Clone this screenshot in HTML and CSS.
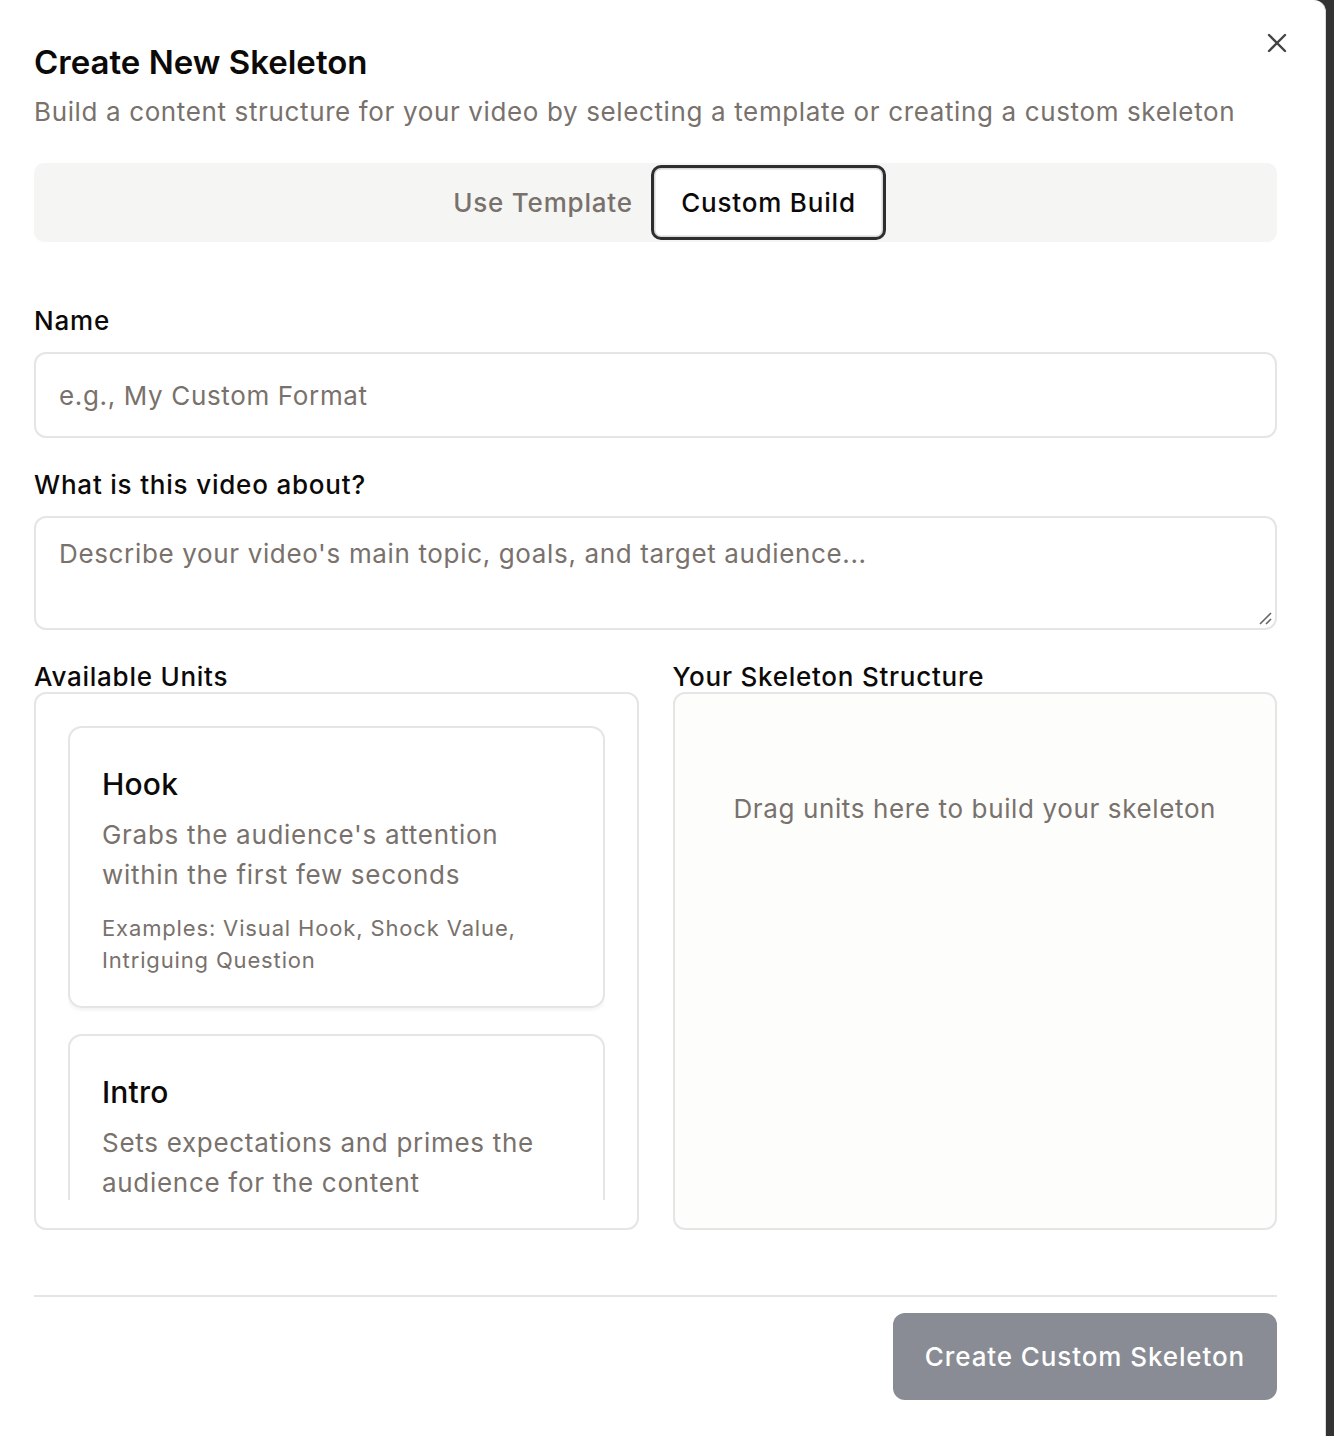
FILE: index.html
```html
<!DOCTYPE html>
<html lang="en">
<head>
<meta charset="utf-8">
<title>Create New Skeleton</title>
<link rel="stylesheet" href="styles.css">
</head>
<body>
<div class="modal">
  <button class="close" aria-label="Close">
    <svg width="20" height="20" viewBox="0 0 20 20"><path d="M2 2 L18 18 M18 2 L2 18" stroke="#444" stroke-width="2.4" stroke-linecap="round" fill="none"/></svg>
  </button>
  <h1 class="title">Create New Skeleton</h1>
  <p class="subtitle">Build a content structure for your video by selecting a template or creating a custom skeleton</p>

  <div class="tabs">
    <button class="tab">Use Template</button>
    <button class="tab active">Custom Build</button>
  </div>

  <label class="label first">Name</label>
  <div class="input"><span class="ph">e.g., My Custom Format</span></div>

  <label class="label">What is this video about?</label>
  <div class="textarea">
    <span class="ph">Describe your video's main topic, goals, and target audience...</span>
    <svg class="grip" width="14" height="14" viewBox="0 0 14 14"><path d="M2 13 L13 2 M8 13 L13 8" stroke="#666" stroke-width="1.6" fill="none"/></svg>
  </div>

  <div class="columns">
    <div class="col">
      <div class="col-label">Available Units</div>
      <div class="box units">
        <div class="list">
          <div class="card">
            <div class="card-title">Hook</div>
            <div class="card-desc">Grabs the audience's attention within the first few seconds</div>
            <div class="card-ex">Examples: Visual Hook, Shock Value, Intriguing Question</div>
          </div>
          <div class="card">
            <div class="card-title">Intro</div>
            <div class="card-desc">Sets expectations and primes the audience for the content</div>
          </div>
        </div>
      </div>
    </div>
    <div class="col">
      <div class="col-label">Your Skeleton Structure</div>
      <div class="box drop">
        <div class="drop-text">Drag units here to build your skeleton</div>
      </div>
    </div>
  </div>

  <div class="footer">
    <button class="primary">Create Custom Skeleton</button>
  </div>
</div>
</body>
</html>
```

FILE: styles.css
```css
* { box-sizing: border-box; }
html, body { margin: 0; padding: 0; }
body {
  background: #333333;
  font-family: Inter, "Noto Sans", "Liberation Sans", sans-serif;
  color: #0c0a09;
  height: 1436px;
  overflow: hidden;
  letter-spacing: 0.7px;
}
.modal {
  position: relative;
  width: 1326px;
  min-height: 1436px;
  background: #ffffff;
  border-right: 1px solid #dcdcdc;
  border-top-right-radius: 12px;
  padding: 42px 48px 40px 34px;
}
.close {
  position: absolute;
  top: 33px;
  left: 1267px;
  width: 20px;
  height: 20px;
  padding: 0;
  border: 0;
  background: none;
  display: flex;
}
.title {
  margin: 0;
  font-size: 33px;
  line-height: 40px;
  font-weight: 600;
  letter-spacing: 0;
}
.subtitle {
  margin: 10px 0 0;
  font-size: 26px;
  line-height: 40px;
  color: #78716c;
  letter-spacing: 0.63px;
}
.tabs {
  margin-top: 31px;
  height: 79px;
  background: #f5f5f4;
  border-radius: 10px;
  display: flex;
  justify-content: center;
  align-items: center;
  gap: 1px;
  padding: 2px 2px 2px 13px;
}
.tab {
  width: 214px;
  height: 75px;
  padding: 0;
  font-family: inherit;
  font-size: 26px;
  font-weight: 500;
  letter-spacing: 0.8px;
  color: #78716c;
  background: transparent;
  border: 2px solid transparent;
  border-radius: 10px;
}
.tab.active {
  width: 235px;
  background: #fff;
  color: #0c0a09;
  border: 3px solid #2e2e2e;
  box-shadow: inset 0 0 0 1.5px #d8d8d8;
}
.label {
  display: block;
  margin-top: 29px;
  font-size: 26px;
  line-height: 36px;
  font-weight: 500;
  letter-spacing: 0.8px;
}
.label.first { margin-top: 61px; }
.input, .textarea {
  margin-top: 13px;
  border: 2px solid #e7e5e4;
  border-radius: 12px;
  padding: 0 23px;
  font-size: 26px;
  color: #78716c;
  letter-spacing: 0.65px;
}
.input {
  height: 86px;
  display: flex;
  align-items: center;
}
.textarea {
  position: relative;
  height: 114px;
  padding-top: 18px;
  line-height: 36px;
}
.grip {
  position: absolute;
  right: 3px;
  bottom: 3px;
}
.columns {
  margin-top: 32px;
  display: grid;
  grid-template-columns: 1fr 1fr;
  gap: 34px;
}
.col-label {
  font-size: 26px;
  line-height: 30px;
  font-weight: 500;
  letter-spacing: 0.75px;
}
.box {
  height: 538px;
  border: 2px solid #e7e5e4;
  border-radius: 12px;
}
.units {
  padding: 32px 32px 28px;
}
.list {
  height: 474px;
  overflow: hidden;
  display: flex;
  flex-direction: column;
  gap: 26px;
}
.card {
  flex: none;
  border: 2px solid #e7e5e4;
  border-radius: 14px;
  padding: 36px 32px 30px;
  box-shadow: 0 2px 4px rgba(0, 0, 0, 0.06);
}
.card-title {
  font-size: 30px;
  line-height: 40px;
  font-weight: 500;
  letter-spacing: 0.2px;
}
.card-desc {
  margin-top: 11px;
  font-size: 26px;
  line-height: 40px;
  color: #78716c;
  letter-spacing: 0.7px;
}
.card-ex {
  margin-top: 17px;
  font-size: 22px;
  line-height: 32px;
  color: #78716c;
  letter-spacing: 0.85px;
}
.drop {
  background: #fdfdfc;
  padding-top: 95px;
}
.drop-text {
  text-align: center;
  font-size: 26px;
  line-height: 40px;
  color: #78716c;
  letter-spacing: 0.63px;
}
.footer {
  margin-top: 65px;
  border-top: 2px solid #e7e5e4;
  padding-top: 16px;
  display: flex;
  justify-content: flex-end;
}
.primary {
  width: 384px;
  height: 87px;
  background: #898c94;
  color: #fff;
  border: 0;
  border-radius: 12px;
  font-family: inherit;
  font-size: 26px;
  font-weight: 500;
  letter-spacing: 0.9px;
}
```
